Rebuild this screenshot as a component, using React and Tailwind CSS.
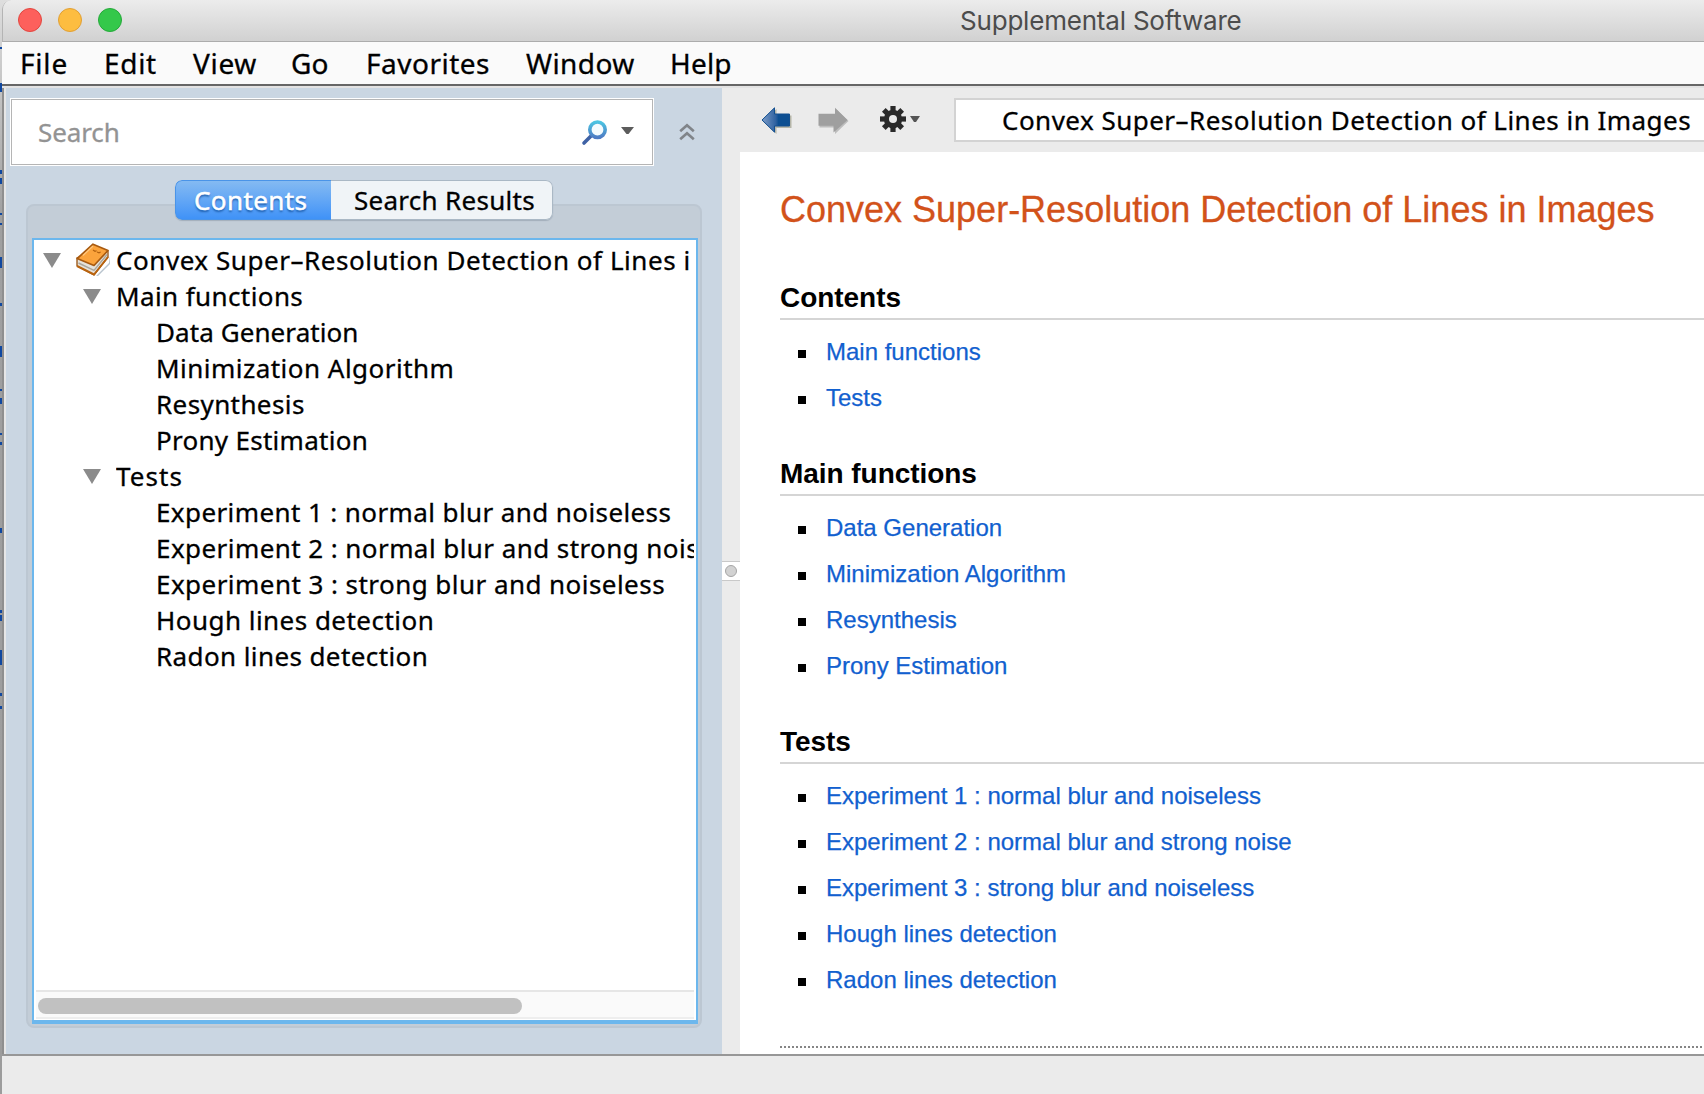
const MENU = ["File", "Edit", "View", "Go", "Favorites", "Window", "Help"];
const MENU_TRACKING = [
  "tracking-[0.8px]",
  "tracking-[0.7px]",
  "tracking-[0.7px]",
  "tracking-[0.2px]",
  "tracking-[0.5px]",
  "tracking-[0.4px]",
  "tracking-[0.2px]",
];

const TREE = [
  { level: 0, text: "Convex Super–Resolution Detection of Lines in Images", open: true, book: true, track: "mr-[3px] tracking-[0.55px]" },
  { level: 1, text: "Main functions", open: true, track: "tracking-[0.4px]" },
  { level: 2, text: "Data Generation", track: "tracking-[0.08px]" },
  { level: 2, text: "Minimization Algorithm", track: "tracking-[0.48px]" },
  { level: 2, text: "Resynthesis", track: "tracking-[0.4px]" },
  { level: 2, text: "Prony Estimation", track: "tracking-[0.28px]" },
  { level: 1, text: "Tests", open: true, track: "tracking-[1.1px]" },
  { level: 2, text: "Experiment 1 : normal blur and noiseless", track: "tracking-[0.4px]" },
  { level: 2, text: "Experiment 2 : normal blur and strong noise", track: "tracking-[0.43px]" },
  { level: 2, text: "Experiment 3 : strong blur and noiseless", track: "tracking-[0.45px]" },
  { level: 2, text: "Hough lines detection", track: "tracking-[0.47px]" },
  { level: 2, text: "Radon lines detection", track: "tracking-[0.4px]" },
];

const SECTIONS = [
  { title: "Contents", items: ["Main functions", "Tests"] },
  { title: "Main functions", items: ["Data Generation", "Minimization Algorithm", "Resynthesis", "Prony Estimation"] },
  {
    title: "Tests",
    items: [
      "Experiment 1 : normal blur and noiseless",
      "Experiment 2 : normal blur and strong noise",
      "Experiment 3 : strong blur and noiseless",
      "Hough lines detection",
      "Radon lines detection",
    ],
  },
];

// Slivers of the window behind, visible along the left edge.
const SLIVERS = [
  [47, 2], [83, 9], [170, 4], [178, 6], [213, 2], [223, 2], [257, 11], [303, 3], [346, 11], [389, 2], [398, 6],
  [433, 2], [442, 3], [528, 5], [610, 3], [615, 6], [650, 15], [693, 3], [706, 3],
];

function Triangle() {
  return (
    <svg className="block h-[15px] w-[18px] shrink-0" viewBox="0 0 18 15">
      <path d="M0 0h18L9 15z" fill="#8b8b8b" />
    </svg>
  );
}

function Book() {
  return (
    <svg className="block h-[34px] w-[34px] shrink-0" viewBox="0 0 34 34">
      <path d="M20 33l13-13 1-7v8L22 33z" fill="#b9c4ce" />
      <path d="M1 15v8l17 9 14-18V8z" fill="#e6e2da" stroke="#96500d" strokeWidth="1.3" strokeLinejoin="round" />
      <path d="M2.500 20l15.500 7.500L31 11.500" fill="none" stroke="#aaa69d" strokeWidth="1.400" />
      <path d="M1 23l17 8.500L32 14" fill="none" stroke="#b9630f" strokeWidth="2" strokeLinejoin="round" />
      <path d="M17 1.200L32 7.500 18 22.500 1.200 15.500z" fill="#fba33c" stroke="#a85a10" strokeWidth="1.700" strokeLinejoin="round" />
      <path d="M17 3L7 12.500" stroke="#ffc77e" strokeWidth="1.200" />
      <path d="M17 7l2 1.300 1.600-.6M21 9l2 .8 1.600-.8" fill="none" stroke="#b3610f" strokeWidth="1.200" />
    </svg>
  );
}

function TrafficLights() {
  return (
    <div className="flex gap-4 pl-[15px]">
      <span className="size-6 rounded-full border border-[#e2463f] bg-[#fd605c]" />
      <span className="size-6 rounded-full border border-[#e09f34] bg-[#fdbd40]" />
      <span className="size-6 rounded-full border border-[#25a93a] bg-[#34c84a]" />
    </div>
  );
}

function SearchBox() {
  return (
    <div className="flex h-[68px] w-[644px] shrink-0 bg-white p-px">
      <div className="flex flex-1 items-center border border-[#b5b5b5] pl-[26px]">
        <span className="w-[543px] text-[26px] leading-[36px] tracking-[-0.1px] text-[#939393] [-webkit-text-stroke:0.3px_#939393]">
          Search
        </span>
        <svg className="mt-px block h-[26px] w-[27px]" viewBox="0 0 27 26">
          <defs>
            <linearGradient id="lens" x1="0" y1="0" x2="0" y2="1">
              <stop offset="0" stopColor="#4cc4e2" />
              <stop offset="1" stopColor="#4e7cc4" />
            </linearGradient>
          </defs>
          <path d="M10.500 15.500L3 23" stroke="#3f62a5" strokeWidth="3.600" strokeLinecap="round" />
          <circle cx="16.500" cy="9.700" r="7.700" fill="#f4fbfe" stroke="url(#lens)" strokeWidth="3.600" />
        </svg>
        <svg className="-mt-[3px] ml-[13px] block h-[7px] w-[13px]" viewBox="0 0 13 7">
          <path d="M0 0h13L7.500 7h-2z" fill="#5c5c5c" />
        </svg>
      </div>
    </div>
  );
}

function Sidebar() {
  return (
    <aside className="flex w-[716px] shrink-0 flex-col bg-[#cad6e2]">
      <div className="flex h-[78px] items-center pl-1 pt-[10px]">
        <SearchBox />
        <svg className="ml-[25px] block h-[18px] w-4" viewBox="0 0 16 18" fill="none" stroke="#808489" strokeWidth="2.600">
          <path d="M1.200 8.200L8 2.200l6.800 6M1.200 16.200L8 10.200l6.800 6" />
        </svg>
      </div>
      <div className="mx-5 mt-[38px] flex h-[824px] w-[676px] flex-col rounded-lg border-2 border-[#bcc7d2] bg-[#c3cdd7] px-1">
        <div className="z-10 -mt-[26px] mb-[18px] ml-[143px] flex h-[40px] w-[378px] shrink-0 overflow-hidden rounded-[7px] text-[26px] leading-[38px] shadow-[0_1px_1px_#a3afbb]">
          <div className="w-[156px] rounded-l-[7px] border border-r-0 border-[#4a94e8] bg-linear-to-b from-[#84baf2] to-[#3f92f7] pl-[18px] tracking-[0.4px] text-white [-webkit-text-stroke:0.5px_white] [text-shadow:0_2px_2px_#1f5fae]">
            Contents
          </div>
          <div className="flex-1 rounded-r-[7px] border border-l-0 border-[#aab8c5] bg-[#f0f4f7] pl-[23px] tracking-[0.28px] [-webkit-text-stroke:0.3px_black]">
            Search Results
          </div>
        </div>
        <div className="flex h-[786px] w-[666px] shrink-0 flex-col border-2 border-b-4 border-[#6cb7ed] bg-white">
          <ul className="flex-1 overflow-hidden pr-[2px] pt-[2px]">
            {TREE.map((n) => (
              <li key={n.text} className="flex h-9 overflow-hidden">
                <span
                  className={
                    n.level === 0
                      ? "flex w-[82px] shrink-0 items-center pl-[9px]"
                      : n.level === 1
                        ? "flex w-[82px] shrink-0 items-center pl-[49px]"
                        : "w-[122px] shrink-0"
                  }
                >
                  {n.open && <Triangle />}
                  {n.book && (
                    <span className="ml-[15px]">
                      <Book />
                    </span>
                  )}
                </span>
                <span
                  className={
                    "min-w-0 flex-1 overflow-hidden text-[26px] leading-[36px] whitespace-nowrap [-webkit-text-stroke:0.3px_black] " +
                    n.track
                  }
                >
                  {n.text}
                </span>
              </li>
            ))}
          </ul>
          <div className="mx-[2px] mb-px h-[29px] border-y-2 border-t-[#e6e6e6] border-b-[#eeeeee] bg-[#fafafa] pl-[2px] pt-[6px]">
            <div className="h-4 w-[484px] rounded-full bg-[#c1c1c1]" />
          </div>
        </div>
      </div>
    </aside>
  );
}

function Splitter() {
  return (
    <div className="flex w-[18px] shrink-0 flex-col bg-[#ebebeb] pt-[473px]">
      <div className="flex h-5 items-center justify-center border-y border-[#c9c9c9] bg-white">
        <span className="size-3 rounded-full border border-[#a5a5a5] bg-[#d2d2d2]" />
      </div>
    </div>
  );
}

function Toolbar() {
  return (
    <div className="flex h-16 shrink-0 items-start bg-[#ebebeb] pt-[10px]">
      <svg className="ml-[21px] mt-[9px] block h-7 w-[32px]" viewBox="0 0 32 28">
        <defs>
          <linearGradient id="back" x1="0" x2="1">
            <stop offset="0" stopColor="#7d9cc8" />
            <stop offset="0.5" stopColor="#2f62a0" />
            <stop offset="0.6" stopColor="#0d4f92" />
          </linearGradient>
        </defs>
        <path d="M2 14.500L15.500 2v6.500h15V21h-15v6z" fill="#b5b5a8" />
        <path d="M1 13L13.500.8v6.200h15v12h-15v6.200z" fill="url(#back)" stroke="#124f8f" strokeWidth="1" />
      </svg>
      <svg className="ml-[25px] mt-[9px] block h-7 w-[32px]" viewBox="0 0 32 28">
        <path d="M30.500 14L18 2v6H1.500v12.500H17V27z" fill="#bdbdbd" />
        <path d="M29.500 13L17 .8v6H.5v12H15.500v6.700z" fill="#9f9f9f" />
      </svg>
      <svg className="ml-[29px] mt-[7px] block size-[28px]" viewBox="-14 -14 28 28" fill="#2a2a2a">
        {[0, 45, 90, 135].map((a) => (
          <rect key={a} x="-2.600" y="-13" width="5.200" height="26" transform={"rotate(" + a + ")"} />
        ))}
        <circle r="9.200" />
        <circle r="4" fill="#ebebeb" />
      </svg>
      <svg className="ml-[3px] mt-[18px] block h-[6px] w-[10px]" viewBox="0 0 10 6">
        <path d="M0 0h10L6 6H4z" fill="#555" />
      </svg>
      <div className="ml-[34px] h-11 flex-1 overflow-hidden border-2 border-r-0 border-[#d3d3d3] bg-white pl-[46px] text-[26px] leading-[40px] tracking-[0.48px] whitespace-nowrap [-webkit-text-stroke:0.3px_black]">
        Convex Super–Resolution Detection of Lines in Images
      </div>
    </div>
  );
}

function Page() {
  return (
    <article className="flex-1 overflow-hidden bg-white pl-10 pt-[37px] font-['Liberation_Sans',sans-serif]">
      <h1 className="text-[36px] leading-[42px] whitespace-nowrap text-[#d2521a] [-webkit-text-stroke:0.3px_#d2521a]">
        Convex Super-Resolution Detection of Lines in Images
      </h1>
      <div className="pt-[14px]">
        {SECTIONS.map((s) => (
          <section key={s.title}>
            <h2 className="mt-[37px] border-b-2 border-[#d5d5d5] pb-1 text-[28px] leading-[32px] font-bold tracking-[-0.05px]">{s.title}</h2>
            <ul className="pt-[9px]">
              {s.items.map((t) => (
                <li key={t} className="flex h-[46px] items-center pl-[18px]">
                  <span className="mt-1 size-2 bg-black" />
                  <span className="ml-5 text-[24px] leading-[46px] text-[#1160cf] [-webkit-text-stroke:0.25px_#1160cf]">{t}</span>
                </li>
              ))}
            </ul>
          </section>
        ))}
      </div>
      <div className="mt-[43px] h-[2px] bg-[repeating-linear-gradient(to_right,#858585_0_2px,#fff_2px_4px)]" />
    </article>
  );
}

export default function App() {
  return (
    <div className="flex h-[1094px] w-[1704px] overflow-hidden bg-linear-to-b from-[#dedede] via-[#a0a0a0] via-20% to-[#9c9c9c] font-['Noto_Sans',sans-serif] text-black">
      <div className="relative w-[2px] shrink-0">
        {SLIVERS.map(([y, h]) => (
          <span key={y} className="absolute left-0 w-[2px] bg-[#1048a0]" style={{ top: y, height: h }} />
        ))}
      </div>
      <div className="flex min-w-0 flex-1 flex-col overflow-hidden rounded-tl-[9px] bg-[#ebebeb]">
        <header className="flex h-[42px] shrink-0 items-center rounded-tl-[9px] border-b border-l border-b-[#acacac] border-l-[#b4b4b4] bg-linear-to-b from-[#ececec] to-[#d1d1d1]">
          <div className="-mt-px w-[957px]">
            <TrafficLights />
          </div>
          <h1 className="font-['Inter',sans-serif] text-[26px] leading-[40px] tracking-[-0.2px] text-[#4c4c4c]">Supplemental Software</h1>
        </header>
        <nav className="grid h-[42px] shrink-0 grid-cols-[84px_89px_98px_75px_160px_144px_100px] bg-[#fafafa] pl-[18px] text-[28px] leading-[42px] [-webkit-text-stroke:0.3px_black]">
          {MENU.map((m, i) => (
            <span key={m} className={MENU_TRACKING[i]}>
              {m}
            </span>
          ))}
        </nav>
        <div className="h-1 shrink-0 border-t-2 border-[#666] bg-[#e3e3e3]" />
        <main className="flex h-[966px] shrink-0">
          <div className="w-1 shrink-0 border-l-2 border-[#8f8f8f] bg-[#e6e6e6]" />
          <Sidebar />
          <Splitter />
          <div className="flex min-w-0 flex-1 flex-col">
            <Toolbar />
            <Page />
          </div>
        </main>
        <footer className="flex-1 border-t-2 border-[#979797] bg-[#ebebeb]" />
      </div>
    </div>
  );
}
